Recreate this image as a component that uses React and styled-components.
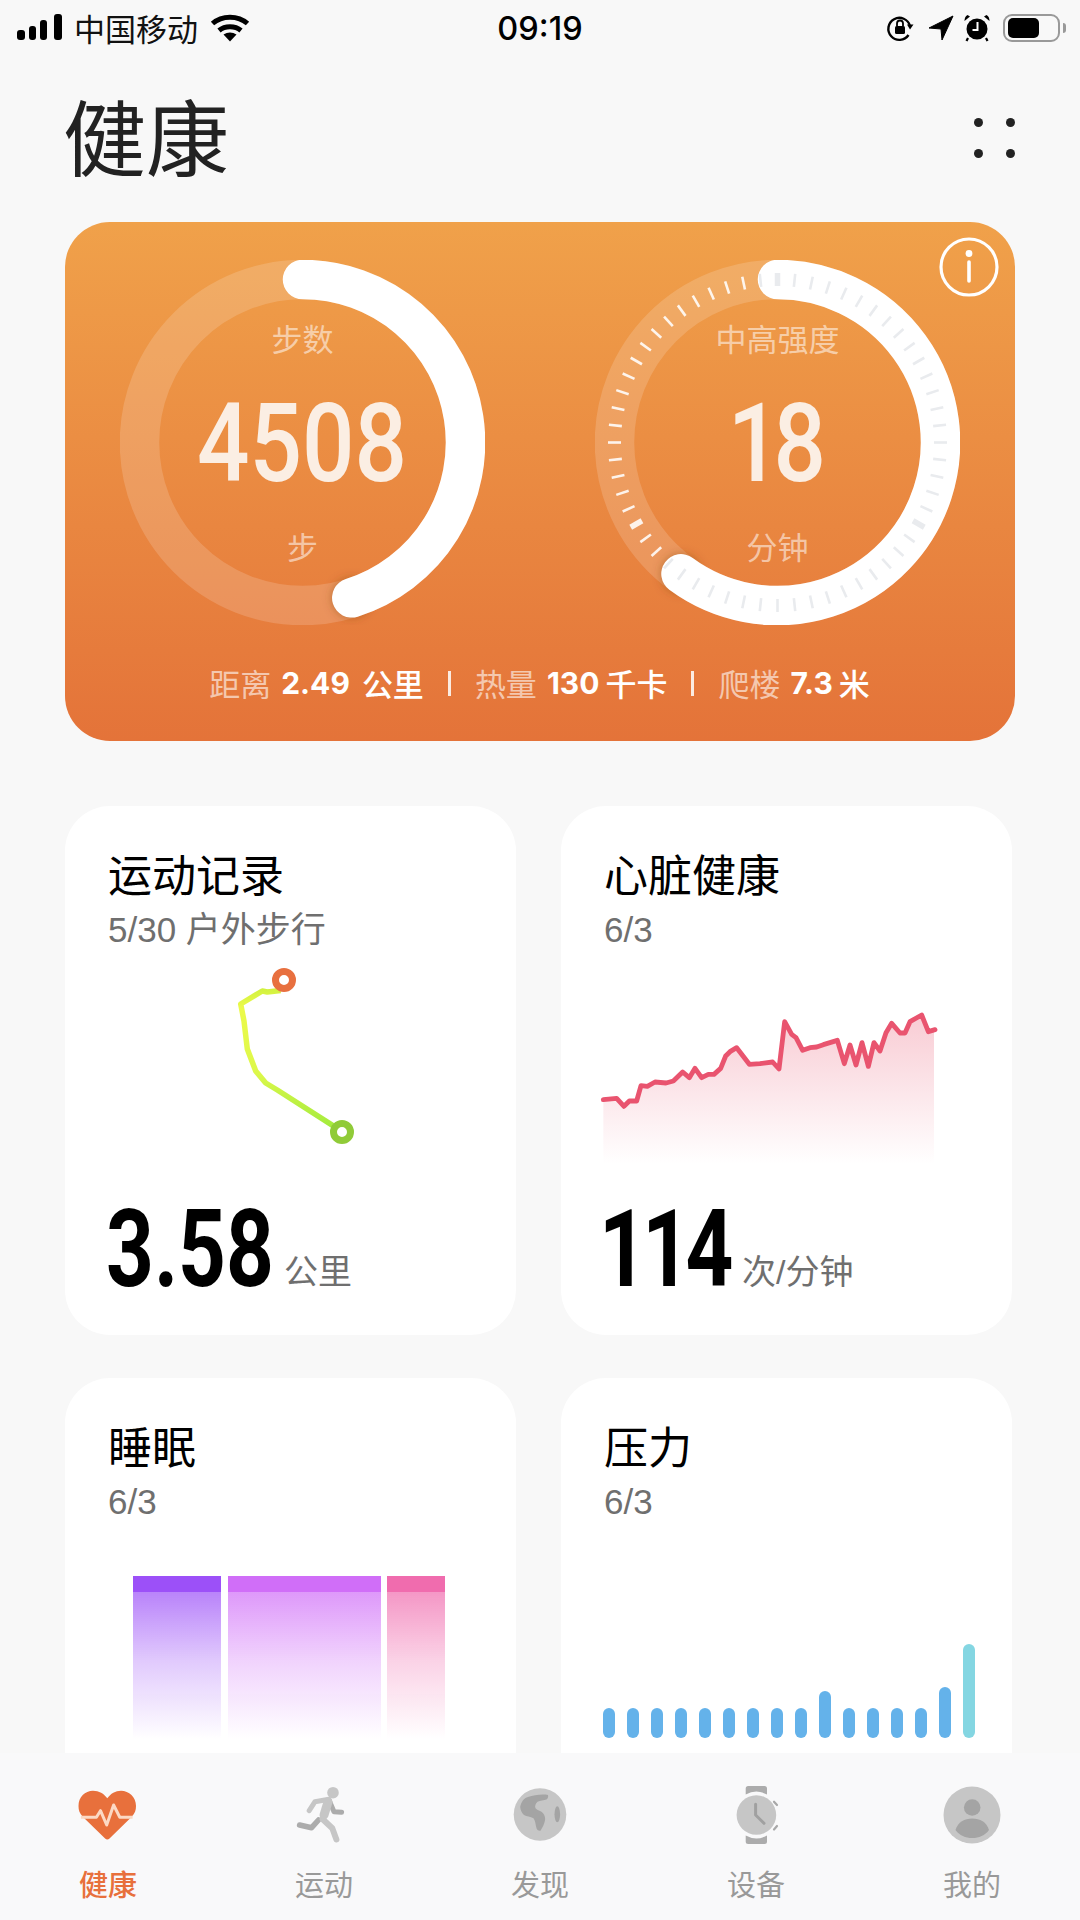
import styled, { createGlobalStyle } from 'styled-components';

const CJK = '"Noto Sans CJK SC", "Noto Sans", sans-serif';
const LATIN = '"Liberation Sans", "Noto Sans CJK SC", sans-serif';
const DIGITS = 'Roboto, "Liberation Sans", sans-serif';

const heartRate = [
  [130, 356], [170, 352], [192, 376], [208, 360], [230, 360], [243, 314], [262, 316], [285, 303],
  [318, 306], [340, 300], [368, 273], [388, 290], [405, 262], [425, 290], [445, 280], [462, 280],
  [482, 262], [497, 225], [510, 212], [530, 200], [568, 250], [600, 248], [638, 243], [657, 264],
  [674, 122], [695, 160], [708, 170], [728, 208], [750, 200], [770, 198], [790, 191], [832, 178],
  [853, 248], [870, 192], [888, 252], [906, 185], [925, 256], [942, 185], [960, 210], [978, 155],
  [995, 127], [1020, 156], [1035, 156], [1050, 122], [1085, 102], [1105, 152], [1125, 146],
];

const stressBars = [30, 30, 30, 30, 30, 30, 30, 30, 30, 47, 30, 30, 30, 30, 51, 94];

const sleepBars = [
  { width: 88, color: '#9c50f8', fade: '156, 80, 248' },
  { width: 153, color: '#d06ef8', fade: '208, 110, 248' },
  { width: 58, color: '#f06cae', fade: '240, 108, 174' },
];

const tabs = [
  { label: '健康', icon: <HeartIcon />, active: true },
  { label: '运动', icon: <RunnerIcon /> },
  { label: '发现', icon: <GlobeIcon /> },
  { label: '设备', icon: <WatchIcon /> },
  { label: '我的', icon: <ProfileIcon /> },
];

function HeartIcon() {
  return (
    <svg width="60" height="60" viewBox="0 0 60 60">
      <path
        fill="#e8703c"
        d="M29.3 54.5c-.8 0-1.5-.4-2.2-1L5 32C1.5 28.5.5 25 .5 21 .5 12 7 5.7 15 5.7c6 0 11 2.8 14.3 7.6C32.6 8.5 37.5 5.7 43 5.7c8 0 15 6.3 15 15.3 0 4-1 7.500-4.500 11L31.500 53.500c-.7.600-1.400 1-2.200 1Z"
      />
      <polyline
        fill="none"
        stroke="#fcd9c4"
        strokeWidth="3"
        strokeLinejoin="round"
        points="2.900,32.300 18.400,32.300 22.500,25.700 28.700,40 35.600,20 41.800,32.300 54.600,32.300"
      />
    </svg>
  );
}

function RunnerIcon() {
  return (
    <svg width="60" height="60" viewBox="0 0 60 60" fill="none" strokeLinecap="round" strokeLinejoin="round">
      <polyline points="24.500,35 17.600,42.700 5.600,40" stroke="#acacac" strokeWidth="5.500" />
      <polyline points="35,15 40,26.700 47.600,27.300" stroke="#acacac" strokeWidth="5" />
      <circle cx="39" cy="7.700" r="5.800" fill="#c6c6c6" />
      <polyline points="15.200,25.700 21,16.700 34.900,14.300" stroke="#c6c6c6" strokeWidth="5" />
      <polyline points="35,16 28.500,34 38.300,43.300 42.400,54.500" stroke="#c6c6c6" strokeWidth="6" />
      <line x1="34" y1="17" x2="30" y2="30" stroke="#c6c6c6" strokeWidth="9" />
    </svg>
  );
}

function GlobeIcon() {
  return (
    <svg width="60" height="60" viewBox="0 0 60 60">
      <circle cx="30" cy="29.500" r="26.300" fill="#c6c6c6" />
      <path
        fill="#a4a4a4"
        d="M10.200 22C11 17 14 13 18 12c6-2 14-3 20-2 .6 2-.4 3.500-1 4.300-3 1.500-7 1-9.500 2.500-2 2-3 4.500-2 6.500 2 2.500 6 2.500 7.600 5 1.800 2.500 2.400 5 1.900 7-.5 3.500-2.300 7-4.500 10.400-2 .5-3.500-1-4-2.500-1-3.500-1-7-3-10-3-2-7-1.500-9.500-3.300-2.500-2-3.500-4.900-3.800-7.900Z"
      />
      <ellipse cx="47.300" cy="29.300" rx="2.800" ry="8" fill="#a4a4a4" />
    </svg>
  );
}

function WatchIcon() {
  return (
    <svg width="60" height="60" viewBox="0 0 60 60" fill="none" strokeLinecap="round" strokeLinejoin="round">
      <path d="M19.700 3.500A2.500 2.500 0 0 1 22.200 1h16.300A2.500 2.500 0 0 1 41 3.500V9.500A22 22 0 0 0 19.700 9.500Z" fill="#acacac" />
      <path d="M19.700 50.500A22 22 0 0 0 41 50.500V56.500A2.500 2.500 0 0 1 38.500 59H22.200A2.500 2.500 0 0 1 19.700 56.500Z" fill="#acacac" />
      <circle cx="30.400" cy="30" r="19.800" fill="#c6c6c6" />
      <polyline points="29.600,19.300 29.600,30 38,38.300" stroke="#a0a0a0" strokeWidth="3" />
      <line x1="48" y1="16.700" x2="51" y2="20" stroke="#a8a8a8" strokeWidth="2.200" />
      <line x1="51" y1="41" x2="48" y2="44.500" stroke="#a8a8a8" strokeWidth="2.200" />
    </svg>
  );
}

function ProfileIcon() {
  return (
    <svg width="60" height="60" viewBox="0 0 60 60">
      <circle cx="30" cy="30" r="28.500" fill="#c6c6c6" />
      <circle cx="30.200" cy="22.500" r="8.300" fill="#a4a4a4" />
      <path
        fill="#a4a4a4"
        d="M13.500 45C16 37 22.500 33.500 30.200 33.500 38 33.500 44.500 37 47 45 43 50.500 37 53 30.200 53 23.500 53 17.500 50.500 13.500 45Z"
      />
    </svg>
  );
}

function polar(angle, radius) {
  const rad = (angle * Math.PI) / 180;
  return [182.5 + radius * Math.sin(rad), 182.5 - radius * Math.cos(rad)];
}

function Ring({ angle, withTicks }) {
  const [endX, endY] = polar(angle, 163);
  const large = angle > 180 ? 1 : 0;
  const ticks = withTicks ? Array.from({ length: 60 }, (_, i) => i * 6) : [];
  return (
    <svg width="365" height="365" viewBox="0 0 365 365">
      <defs>
        <filter id={`capShadow${Math.round(angle)}`} x="-50%" y="-50%" width="200%" height="200%">
          <feGaussianBlur stdDeviation="5" />
        </filter>
      </defs>
      <circle cx="182.500" cy="182.500" r="163" fill="none" stroke="rgba(255,255,255,0.16)" strokeWidth="39.500" />
      <circle cx={endX} cy={endY} r="20" fill="rgba(120,60,20,0.4)" filter={`url(#capShadow${Math.round(angle)})`} />
      <path
        d={`M182.500 19.500 A163 163 0 ${large} 1 ${endX} ${endY}`}
        fill="none"
        stroke="#fff"
        strokeWidth="39.500"
        strokeLinecap="round"
      />
      {ticks.map((deg) => {
        const onArc = deg <= angle + 6 || deg >= 354;
        const major = deg % 120 === 0;
        const [x1, y1] = polar(deg, 156.5);
        const [x2, y2] = polar(deg, 169.5);
        return (
          <line
            key={deg}
            x1={x1}
            y1={y1}
            x2={x2}
            y2={y2}
            stroke={onArc ? '#e9ebee' : 'rgba(255,255,255,0.88)'}
            strokeWidth={major ? 5.5 : 2.6}
          />
        );
      })}
    </svg>
  );
}

export default function App() {
  return (
    <Screen>
      <GlobalStyle />
      <StatusBar>
        <StatusLeft>
          <svg width="46" height="28" viewBox="0 0 46 28">
            <rect x="1" y="16" width="8" height="10" rx="3" />
            <rect x="13" y="12" width="7" height="14" rx="3" />
            <rect x="24" y="6" width="7" height="20" rx="3" />
            <rect x="38" y="0" width="8" height="26" rx="3" />
          </svg>
          <Carrier>中国移动</Carrier>
          <svg width="40" height="28" viewBox="0 0 40 28" fill="none" stroke="#000" strokeWidth="5">
            <path d="M2.500 9.500C12 1 28 1 37.500 9.500" />
            <path d="M9 16.500C15 11.500 25 11.500 31 16.500" />
            <path d="M13.500 20.500 20 27.500 26.500 20.500C22.500 17.700 17.500 17.700 13.500 20.500Z" fill="#000" stroke="none" />
          </svg>
        </StatusLeft>
        <Clock>09:19</Clock>
        <StatusRight>
          <svg width="28" height="28" viewBox="0 0 28 28" fill="none" stroke="#000" strokeWidth="2.400">
            <path d="M24 12A11 11 0 1 0 22.500 21" />
            <path d="M21 10.500h6.500L24 15.500Z" fill="#000" stroke="none" />
            <rect x="9" y="12" width="10" height="8" rx="1.500" fill="#000" stroke="none" />
            <path d="M11 12V9.500a3 3 0 0 1 6 0V12" strokeWidth="1.800" />
          </svg>
          <LocationGap>
            <svg width="26" height="26" viewBox="0 0 26 26">
              <path d="M25 1 1 13 13 14 14 25Z" fill="#000" stroke="#000" strokeWidth="1" strokeLinejoin="round" />
            </svg>
          </LocationGap>
          <svg width="28" height="28" viewBox="0 0 28 28">
            <circle cx="14" cy="15" r="10.500" fill="#000" />
            <path d="M1.500 7 7 2.500 4.500 1C2.500 2 1.500 4 1.500 7ZM26.500 7 21 2.500 23.500 1C25.500 2 26.500 4 26.500 7Z" />
            <path d="M5 24 3.500 27M23 24 24.500 27" stroke="#000" strokeWidth="2.200" />
            <polyline points="14.500,8 14.500,16 9.500,16" fill="none" stroke="#fff" strokeWidth="2" />
          </svg>
          <BatteryShell>
            <BatteryLevel />
          </BatteryShell>
          <BatteryNub />
        </StatusRight>
      </StatusBar>

      <Header>
        <PageTitle>健康</PageTitle>
        <DotGrid>
          <Dot />
          <Dot />
          <Dot />
          <Dot />
        </DotGrid>
      </Header>

      <Content>
        <Hero>
          <InfoButton>
            <svg width="60" height="60" viewBox="0 0 60 60" fill="none" stroke="#fff">
              <circle cx="30" cy="30" r="28" strokeWidth="3.200" />
              <circle cx="30" cy="16.500" r="3.400" fill="#fff" stroke="none" />
              <line x1="30" y1="25" x2="30" y2="44" strokeWidth="3.600" strokeLinecap="round" />
            </svg>
          </InfoButton>
          <Rings>
            <RingBox>
              <Ring angle={162.4} />
              <RingText>
                <RingLabel>步数</RingLabel>
                <RingValue>4508</RingValue>
                <RingUnit>步</RingUnit>
              </RingText>
            </RingBox>
            <RingBox>
              <Ring angle={216.3} withTicks />
              <RingText>
                <RingLabel>中高强度</RingLabel>
                <RingValue $tight>18</RingValue>
                <RingUnit>分钟</RingUnit>
              </RingText>
            </RingBox>
          </Rings>
          <Stats>
            <StatGroup>
              <StatLabel>距离</StatLabel>
              <StatNumber $after={12}>2.49</StatNumber>
              <StatUnit>公里</StatUnit>
            </StatGroup>
            <StatDivider />
            <StatGroup>
              <StatLabel>热量</StatLabel>
              <StatNumber $after={6}>130</StatNumber>
              <StatUnit>千卡</StatUnit>
            </StatGroup>
            <StatDivider />
            <StatGroup>
              <StatLabel>爬楼</StatLabel>
              <StatNumber $after={6}>7.3</StatNumber>
              <StatUnit>米</StatUnit>
            </StatGroup>
          </Stats>
        </Hero>

        <CardGrid>
          <Card>
            <CardTitle>运动记录</CardTitle>
            <CardSub>5/30 户外步行</CardSub>
            <Chart>
              <svg width="364" height="240" viewBox="109 951 364 240" fill="none">
                <defs>
                  <linearGradient id="routeLine" gradientUnits="userSpaceOnUse" x1="0" y1="985" x2="0" y2="1131">
                    <stop offset="0" stopColor="#cdf03e" />
                    <stop offset="0.15" stopColor="#ecfa4a" />
                    <stop offset="0.6" stopColor="#dcf84a" />
                    <stop offset="1" stopColor="#9eea3c" />
                  </linearGradient>
                </defs>
                <polyline
                  stroke="url(#routeLine)"
                  strokeWidth="5.500"
                  strokeLinejoin="round"
                  points="281.700,989.400 268.300,991 263.300,990 241.700,1003 245,1020 248.300,1048 256.700,1070 266.700,1082 278.300,1089 343.300,1130.600"
                />
                <circle cx="285" cy="979" r="8.500" stroke="#e8703f" strokeWidth="7" fill="#fff" />
                <circle cx="343" cy="1131" r="8.500" stroke="#90cb38" strokeWidth="7" fill="#fff" />
              </svg>
            </Chart>
            <Reading>
              <ReadingValue $slot={176} $inset={-2}>3.58</ReadingValue>
              <ReadingUnit>公里</ReadingUnit>
            </Reading>
          </Card>

          <Card>
            <CardTitle>心脏健康</CardTitle>
            <CardSub>6/3</CardSub>
            <Chart>
              <svg width="364" height="240" viewBox="132 -87 1092 720" fill="none" overflow="visible">
                <defs>
                  <linearGradient id="heartFill" x1="0" y1="0" x2="0" y2="1">
                    <stop offset="0" stopColor="#e9546f" stopOpacity="0.3" />
                    <stop offset="1" stopColor="#e9546f" stopOpacity="0" />
                  </linearGradient>
                </defs>
                <polygon
                  fill="url(#heartFill)"
                  points={`${heartRate.map((p) => p.join(',')).join(' ')} 1122,146 1122,548 130,548`}
                />
                <polyline
                  stroke="#e9546f"
                  strokeWidth="14.500"
                  strokeLinejoin="round"
                  strokeLinecap="round"
                  points={heartRate.map((p) => p.join(',')).join(' ')}
                />
              </svg>
            </Chart>
            <Reading>
              <ReadingValue $slot={138} $spacing={-6} $inset={-5}>114</ReadingValue>
              <ReadingUnit>次/分钟</ReadingUnit>
            </Reading>
          </Card>

          <Card>
            <CardTitle>睡眠</CardTitle>
            <CardSub>6/3</CardSub>
            <SleepChart>
              {sleepBars.map((bar) => (
                <SleepBar key={bar.color} $width={bar.width} $color={bar.color} $fade={bar.fade} />
              ))}
            </SleepChart>
          </Card>

          <Card>
            <CardTitle>压力</CardTitle>
            <CardSub>6/3</CardSub>
            <StressChart>
              {stressBars.map((height, i) => (
                <StressBar key={i} $height={height} $last={i === stressBars.length - 1} />
              ))}
            </StressChart>
          </Card>
        </CardGrid>
      </Content>

      <TabBar>
        {tabs.map((tab) => (
          <Tab key={tab.label}>
            {tab.icon}
            <TabLabel $active={tab.active}>{tab.label}</TabLabel>
          </Tab>
        ))}
      </TabBar>
    </Screen>
  );
}

const GlobalStyle = createGlobalStyle`
  html, body {
    margin: 0;
    padding: 0;
    background: #f8f8f8;
  }

  * {
    box-sizing: border-box;
  }
`;

const Screen = styled.div`
  width: 1080px;
  height: 1920px;
  display: flex;
  flex-direction: column;
  overflow: hidden;
  background: #f8f8f8;
  font-family: ${CJK};
`;

const StatusBar = styled.div`
  height: 56px;
  display: grid;
  grid-template-columns: 1fr auto 1fr;
  align-items: center;
`;

const StatusLeft = styled.div`
  display: flex;
  align-items: center;
  padding-left: 16px;
  gap: 12px;
`;

const Carrier = styled.span`
  font-size: 31px;
  line-height: 40px;
  color: #111;
`;

const Clock = styled.span`
  font-family: Inter, ${LATIN};
  font-weight: 500;
  font-size: 32.500px;
  color: #000;
`;

const StatusRight = styled.div`
  display: flex;
  align-items: center;
  justify-content: flex-end;
  padding-right: 14px;
  gap: 9px;
`;

const LocationGap = styled.span`
  display: flex;
  margin-left: 5px;
`;

const BatteryShell = styled.div`
  width: 57px;
  height: 28px;
  border: 2.5px solid #999;
  border-radius: 9px;
  padding: 2px 3px;
  margin-left: 3px;
`;

const BatteryLevel = styled.div`
  width: 31px;
  height: 100%;
  background: #000;
  border-radius: 5px;
`;

const BatteryNub = styled.div`
  width: 3px;
  height: 10px;
  background: #999;
  border-radius: 0 3px 3px 0;
  margin-left: -6px;
`;

const Header = styled.header`
  height: 166px;
  display: flex;
  align-items: center;
  justify-content: space-between;
  padding: 0 65px 10px 63px;
`;

const PageTitle = styled.h1`
  margin: 0;
  font-size: 83px;
  font-weight: 400;
  line-height: 100px;
  color: #222;
`;

const DotGrid = styled.div`
  display: grid;
  grid-template-columns: 9px 9px;
  gap: 22px 23px;
  margin-top: 8px;
`;

const Dot = styled.span`
  width: 9px;
  height: 9px;
  border-radius: 50%;
  background: #222;
`;

const Content = styled.main`
  flex: 1;
  min-height: 0;
  overflow: hidden;
  padding-left: 65px;
`;

const Hero = styled.section`
  position: relative;
  width: 950px;
  height: 519px;
  padding: 38px 55px 0;
  border-radius: 45px;
  background: linear-gradient(180deg, #f0a14a 0%, #e47339 100%);
`;

const InfoButton = styled.div`
  position: absolute;
  top: 15px;
  right: 16px;
  width: 60px;
  height: 60px;
`;

const Rings = styled.div`
  display: flex;
  justify-content: space-between;
  width: 840px;
`;

const RingBox = styled.div`
  position: relative;
  width: 365px;
  height: 365px;
`;

const RingText = styled.div`
  position: absolute;
  inset: 0;
  display: flex;
  flex-direction: column;
  align-items: center;
  padding-top: 57px;
`;

const RingLabel = styled.span`
  font-size: 31px;
  line-height: 42px;
  color: rgba(255, 255, 255, 0.55);
`;

const RingValue = styled.span`
  margin-top: 30px;
  margin-left: ${(p) => (p.$tight ? '-8px' : '0')};
  font-family: ${DIGITS};
  font-size: 110px;
  font-weight: 500;
  line-height: 110px;
  color: #fbeee3;
  letter-spacing: ${(p) => (p.$tight ? '-8px' : '0')};
  transform: scaleX(0.84);
`;

const RingUnit = styled(RingLabel)`
  margin-top: 26px;
`;

const Stats = styled.div`
  display: flex;
  justify-content: center;
  align-items: center;
  gap: 24px;
  margin-top: 36px;
  margin-left: -1px;
`;

const StatGroup = styled.div`
  display: flex;
  align-items: center;
  gap: 10px;
`;

const StatLabel = styled.span`
  font-size: 31px;
  line-height: 44px;
  color: rgba(255, 255, 255, 0.6);
`;

const StatNumber = styled.span`
  font-family: Inter, ${LATIN};
  font-size: 30px;
  font-weight: 700;
  color: #fff;
  margin-right: ${(p) => p.$after - 10}px;
`;

const StatUnit = styled(StatLabel)`
  color: #fff;
  font-weight: 500;
`;

const StatDivider = styled.span`
  width: 3px;
  height: 25px;
  background: rgba(255, 255, 255, 0.85);
`;

const CardGrid = styled.div`
  display: grid;
  grid-template-columns: 451px 451px;
  grid-auto-rows: 529px;
  gap: 43px 45px;
  margin-top: 65px;
`;

const Card = styled.article`
  padding: 37px 44px 0 43px;
  border-radius: 45px;
  background: #fff;
`;

const CardTitle = styled.h2`
  margin: 0;
  font-size: 44px;
  font-weight: 400;
  line-height: 60px;
  color: #000;
`;

const CardSub = styled.p`
  margin: 5px 0 0;
  font-family: ${LATIN};
  font-size: 35px;
  line-height: 44px;
  color: #6f6f6f;
`;

const Chart = styled.div`
  height: 241px;
`;

const Reading = styled.div`
  display: flex;
  align-items: flex-end;
  margin-top: 2px;
`;

const ReadingValue = styled.span`
  display: inline-block;
  width: ${(p) => p.$slot}px;
  margin-left: ${(p) => p.$inset}px;
  margin-right: ${(p) => -p.$inset}px;
  white-space: nowrap;
  font-family: ${DIGITS};
  font-size: 107px;
  font-weight: 700;
  line-height: 110px;
  letter-spacing: ${(p) => p.$spacing || 0}px;
  color: #000;
  transform: scaleX(0.78);
  transform-origin: left center;
`;

const ReadingUnit = styled.span`
  margin-bottom: 11px;
  font-family: ${LATIN};
  font-size: 34px;
  line-height: 44px;
  color: #6f6f6f;
`;

const SleepChart = styled.div`
  display: flex;
  gap: 6.5px;
  height: 165px;
  margin: 51px 0 0 25px;
`;

const SleepBar = styled.div`
  width: ${(p) => p.$width}px;
  border-top: 1px solid rgba(255, 255, 255, 0.5);
  background:
    linear-gradient(${(p) => p.$color}, ${(p) => p.$color}) top / 100% 16px no-repeat,
    linear-gradient(rgba(${(p) => p.$fade}, 0.8), rgba(${(p) => p.$fade}, 0.3) 52%, rgba(${(p) => p.$fade}, 0));
`;

const StressChart = styled.div`
  display: flex;
  align-items: flex-end;
  gap: 12px;
  height: 94px;
  margin: 120px 0 0 -1px;
`;

const StressBar = styled.div`
  flex: none;
  width: 12px;
  height: ${(p) => p.$height}px;
  border-radius: 6px;
  background: ${(p) => (p.$last ? '#84d6e2' : '#64b2ea')};
`;

const TabBar = styled.nav`
  flex: none;
  height: 167px;
  display: grid;
  grid-template-columns: repeat(5, 1fr);
  padding-top: 32px;
  background: #f9f9fa;
`;

const Tab = styled.div`
  display: flex;
  flex-direction: column;
  align-items: center;
`;

const TabLabel = styled.span`
  margin-top: 18px;
  font-size: 29px;
  line-height: 40px;
  color: ${(p) => (p.$active ? '#e8703c' : '#999')};
  font-weight: ${(p) => (p.$active ? 500 : 400)};
`;
